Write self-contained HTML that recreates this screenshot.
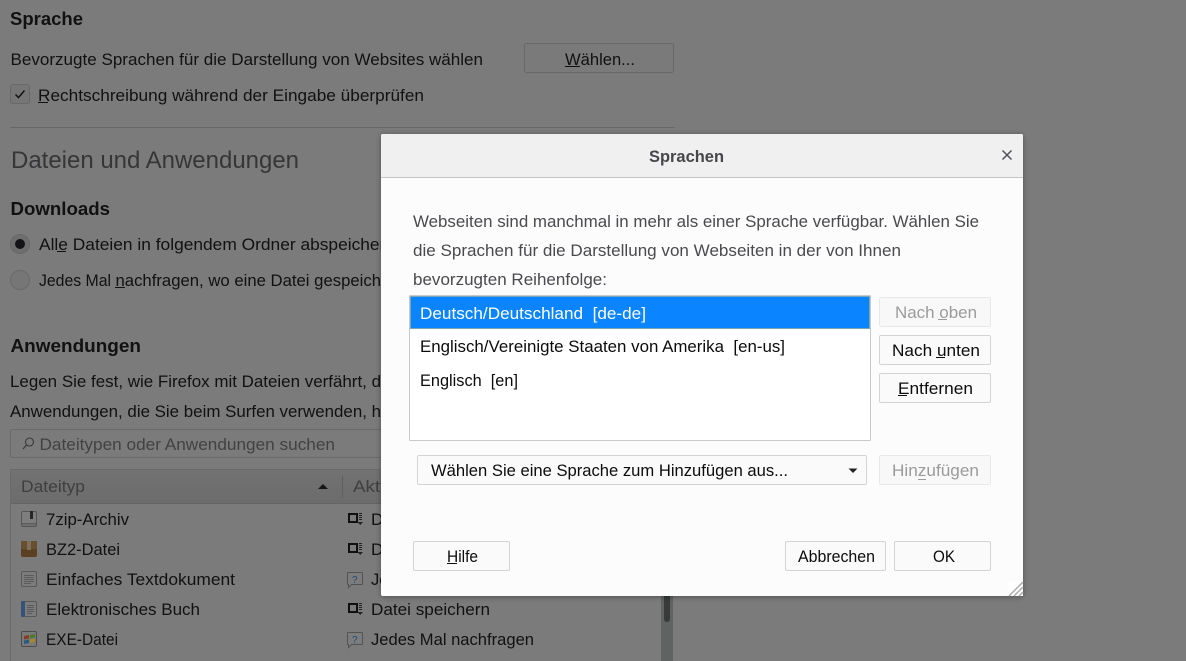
<!DOCTYPE html>
<html lang="de"><head><meta charset="utf-8"><title>Sprachen</title>
<style>
html,body{margin:0;padding:0;background:#7b7b7b;overflow:hidden}
svg{display:block}
text{font-family:"Liberation Sans",sans-serif;font-size:16.5px;fill:#0e0e10;white-space:pre}
.b{font-weight:bold}
.d{fill:#111}
.g{fill:#3d3d3f}
.m{fill:#4a4a4f}
.k{fill:#0c0c0d}
.x{fill:#9b9b9e}
</style></head><body>
<svg width="1186" height="661" viewBox="0 0 1186 661" xmlns="http://www.w3.org/2000/svg">
<defs>
<linearGradient id="hd" x1="0" y1="0" x2="0" y2="1"><stop offset="0" stop-color="#727272"/><stop offset="1" stop-color="#6c6c6c"/></linearGradient>
<filter id="sh" x="-5%" y="-5%" width="110%" height="110%"><feDropShadow dx="0" dy="1" stdDeviation="3" flood-color="#000" flood-opacity=".35"/></filter>
</defs>
<rect width="1186" height="661" fill="#7b7b7b"/>

<!-- background page -->
<text class="b d" x="10" y="25" textLength="73" lengthAdjust="spacingAndGlyphs" style="font-size:18px">Sprache</text>
<text class="d" x="10.5" y="65" textLength="472.5" lengthAdjust="spacingAndGlyphs">Bevorzugte Sprachen für die Darstellung von Websites wählen</text>
<rect x="524.5" y="43.5" width="149" height="29" rx="2" fill="#7a7a7a" stroke="#696969"/>
<text class="d" x="565" y="65" textLength="70" lengthAdjust="spacingAndGlyphs">Wählen...</text>
<rect x="565" y="66" width="15" height="1" fill="#111"/>
<rect x="10.5" y="84.5" width="19" height="19" rx="2" fill="#767676" stroke="#686868"/>
<path d="M15.5 94.5l3 3 6-7" fill="none" stroke="#141414" stroke-width="1.5"/>
<text class="d" x="38" y="101" textLength="386" lengthAdjust="spacingAndGlyphs">Rechtschreibung während der Eingabe überprüfen</text>
<rect x="38" y="102" width="10" height="1" fill="#111"/>
<rect x="10" y="127" width="665" height="1" fill="#686868"/>
<text x="11" y="168" textLength="288" lengthAdjust="spacingAndGlyphs" style="font-size:24px;fill:#363638">Dateien und Anwendungen</text>
<text class="b d" x="10.5" y="215" textLength="99.5" lengthAdjust="spacingAndGlyphs" style="font-size:18px">Downloads</text>

<circle cx="20" cy="244" r="9.5" fill="#6e6e6e" stroke="#686868"/>
<circle cx="20" cy="244" r="5" fill="#141416"/>
<text class="d" x="39" y="250" textLength="356" lengthAdjust="spacingAndGlyphs">Alle Dateien in folgendem Ordner abspeichern</text>
<rect x="57" y="251" width="9" height="1" fill="#111"/>
<circle cx="20" cy="280" r="9.5" fill="#767676" stroke="#696969"/>
<text class="d" x="39" y="286" textLength="72" lengthAdjust="spacingAndGlyphs">Jedes Mal</text>
<text class="d" x="115.500" y="286" textLength="265.500" lengthAdjust="spacingAndGlyphs">nachfragen, wo eine Datei gespeich</text>
<rect x="115" y="287" width="10" height="1" fill="#111"/>

<text class="b d" x="10.5" y="352" textLength="130.5" lengthAdjust="spacingAndGlyphs" style="font-size:18px">Anwendungen</text>
<text class="d" x="10" y="387" textLength="371" lengthAdjust="spacingAndGlyphs">Legen Sie fest, wie Firefox mit Dateien verfährt, d</text>
<text class="d" x="10" y="417" textLength="371" lengthAdjust="spacingAndGlyphs">Anwendungen, die Sie beim Surfen verwenden, h</text>

<rect x="10.5" y="429.5" width="400" height="28" rx="2" fill="#7b7b7b" stroke="#6a6a6a"/>
<circle cx="29.5" cy="442" r="4" fill="none" stroke="#383838" stroke-width="1.1"/>
<path d="M26.5 445l-3.5 4" stroke="#383838" stroke-width="1.2"/>
<text x="39.5" y="450" textLength="295.5" lengthAdjust="spacingAndGlyphs" style="fill:#424244">Dateitypen oder Anwendungen suchen</text>

<rect x="10.5" y="469.5" width="662" height="200" fill="#7b7b7b" stroke="#6a6a6a"/>
<rect x="11" y="470" width="650" height="33" fill="url(#hd)"/>
<rect x="11" y="503" width="650" height="1" fill="#646464"/>
<text x="21" y="492" textLength="64" lengthAdjust="spacingAndGlyphs" style="fill:#3f3f41">Dateityp</text>
<path d="M318 489l5-5 5 5z" fill="#161616"/>
<rect x="342" y="476" width="1" height="21" fill="#5f5f5f"/>
<text x="353" y="492" textLength="52" lengthAdjust="spacingAndGlyphs" style="fill:#3f3f41">Aktion</text>

<text class="d" x="46" y="525" textLength="83" lengthAdjust="spacingAndGlyphs">7zip-Archiv</text>
<text class="d" x="46" y="555" textLength="74" lengthAdjust="spacingAndGlyphs">BZ2-Datei</text>
<text class="d" x="46" y="585" textLength="189" lengthAdjust="spacingAndGlyphs">Einfaches Textdokument</text>
<text class="d" x="46" y="615" textLength="154" lengthAdjust="spacingAndGlyphs">Elektronisches Buch</text>
<text class="d" x="46" y="645" textLength="72" lengthAdjust="spacingAndGlyphs">EXE-Datei</text>

<!-- file icons -->
<rect x="21.5" y="511.5" width="15" height="15" rx="1.5" fill="#7e7e7e" stroke="#565656"/>
<path d="M22 523.5h14M22 525h14" stroke="#5c5c5c"/><rect x="30" y="511" width="3" height="8" fill="#262626"/>
<rect x="21" y="541" width="16" height="16" rx="2" fill="#5a4124"/>
<rect x="21" y="541" width="16" height="8" fill="#66502f"/><rect x="27" y="541" width="4" height="9" fill="#7d6f5a"/>
<rect x="21.5" y="571.5" width="15" height="15" rx="1.5" fill="#7c7c7c" stroke="#585858"/>
<path d="M24 575.5h10M24 577.5h10M24 579.5h10M24 581.5h10M24 583.5h7" stroke="#5a5a5a"/>
<rect x="21.5" y="601.5" width="15" height="15" rx="1.5" fill="#7c7c7c" stroke="#585858"/>
<rect x="21" y="601" width="4" height="16" rx="1" fill="#36527a"/>
<path d="M27 605.5h7M27 607.5h7M27 609.5h7M27 611.5h7M27 613.5h5" stroke="#5a5a5a"/>
<rect x="21.5" y="631.5" width="15" height="15" rx="1.5" fill="#7a7a7a" stroke="#4c4c4c"/>
<path d="M24 636l5-1v3.500l-5 1z" fill="#8a3a22"/><path d="M30 635l5-1v3.500l-5 1z" fill="#4d7a2a"/><path d="M24 640.500l5-1v3.500l-5 1z" fill="#2a5a8a"/><path d="M30 639.500l5-1v3.500l-5 1z" fill="#a8862a"/>

<!-- action icons -->
<g><rect x="349" y="514" width="8" height="8" fill="none" stroke="#101010" stroke-width="2"/><path d="M359 513.5h3M359 515.5h3M359 517.5h3M359 519.5h3" stroke="#222"/><path d="M357.5 522h5.5l-2.750 3z" fill="#222"/></g>
<g transform="translate(0,30)"><rect x="349" y="514" width="8" height="8" fill="none" stroke="#101010" stroke-width="2"/><path d="M359 513.5h3M359 515.5h3M359 517.5h3M359 519.5h3" stroke="#222"/><path d="M357.5 522h5.500l-2.750 3z" fill="#222"/></g>
<g transform="translate(0,90)"><rect x="349" y="514" width="8" height="8" fill="none" stroke="#101010" stroke-width="2"/><path d="M359 513.5h3M359 515.5h3M359 517.5h3M359 519.5h3" stroke="#222"/><path d="M357.5 522h5.500l-2.750 3z" fill="#222"/></g>
<path d="M348.500 572.500h13a1 1 0 0 1 1 1v10a1 1 0 0 1-1 1h-10l-3 3v-3a1 1 0 0 1-1-1v-10a1 1 0 0 1 1-1z" fill="#7c7c7c" stroke="#525252"/>
<text x="352" y="583" style="font-size:10px;fill:#234a78">?</text>
<path d="M348.500 632.500h13a1 1 0 0 1 1 1v10a1 1 0 0 1-1 1h-10l-3 3v-3a1 1 0 0 1-1-1v-10a1 1 0 0 1 1-1z" fill="#7c7c7c" stroke="#525252"/>
<text x="352" y="643" style="font-size:10px;fill:#234a78">?</text>

<text class="d" x="371" y="525" textLength="119" lengthAdjust="spacingAndGlyphs">Datei speichern</text>
<text class="d" x="371" y="555" textLength="119" lengthAdjust="spacingAndGlyphs">Datei speichern</text>
<text class="d" x="371" y="585" textLength="163" lengthAdjust="spacingAndGlyphs">Jedes Mal nachfragen</text>
<text class="d" x="371" y="615" textLength="119" lengthAdjust="spacingAndGlyphs">Datei speichern</text>
<text class="d" x="371" y="645" textLength="163" lengthAdjust="spacingAndGlyphs">Jedes Mal nachfragen</text>

<rect x="661" y="504" width="12" height="157" fill="#5f6361"/>
<rect x="664" y="504" width="6" height="118" rx="3" fill="#383b3a"/>

<!-- dialog -->
<rect x="381" y="134" width="642" height="462" rx="2" fill="#fcfcfc" filter="url(#sh)"/>
<path d="M381 177v-41a2 2 0 0 1 2-2h638a2 2 0 0 1 2 2v41z" fill="#f0f0f0"/>
<rect x="381" y="177" width="642" height="1" fill="#c4c4c4"/>
<text class="b" x="649" y="162" textLength="75" lengthAdjust="spacingAndGlyphs" style="fill:#46464b;font-size:16.500px">Sprachen</text>
<path d="M1002.500 150.500l9 9M1011.500 150.500l-9 9" stroke="#50505a" stroke-width="1.500" fill="none"/>

<text class="m" x="413" y="227" textLength="566" lengthAdjust="spacingAndGlyphs">Webseiten sind manchmal in mehr als einer Sprache verfügbar. Wählen Sie</text>
<text class="m" x="413" y="256" textLength="488" lengthAdjust="spacingAndGlyphs">die Sprachen für die Darstellung von Webseiten in der von Ihnen</text>
<text class="m" x="413" y="285" textLength="194" lengthAdjust="spacingAndGlyphs">bevorzugten Reihenfolge:</text>

<rect x="409.500" y="295.500" width="461" height="145" rx="1" fill="#fff" stroke="#c8c8c8"/>
<rect x="410" y="296" width="460" height="33" fill="#0a84ff"/>
<rect x="410.500" y="296.500" width="459" height="32" fill="none" stroke="#e8c877" stroke-dasharray="1 1"/>
<text x="420" y="319" textLength="226" lengthAdjust="spacingAndGlyphs" style="fill:#fff">Deutsch/Deutschland  [de-de]</text>
<text class="k" x="420" y="352" textLength="365" lengthAdjust="spacingAndGlyphs">Englisch/Vereinigte Staaten von Amerika  [en-us]</text>
<text class="k" x="420" y="386" textLength="98" lengthAdjust="spacingAndGlyphs">Englisch  [en]</text>

<rect x="879.500" y="297.500" width="111" height="29" rx="1.500" fill="#f8f8f8" stroke="#e8e8e8"/>
<text class="x" x="895" y="318" textLength="82" lengthAdjust="spacingAndGlyphs">Nach oben</text>
<rect x="938" y="319" width="9" height="1" fill="#9b9b9e"/>
<rect x="879.500" y="335.500" width="111" height="29" rx="1.500" fill="#fafafa" stroke="#d4d4d4"/>
<text class="k" x="892" y="356" textLength="88" lengthAdjust="spacingAndGlyphs">Nach unten</text>
<rect x="936" y="357" width="9" height="1" fill="#0c0c0d"/>
<rect x="879.500" y="373.500" width="111" height="29" rx="1.500" fill="#fafafa" stroke="#d4d4d4"/>
<text class="k" x="898" y="394" textLength="75" lengthAdjust="spacingAndGlyphs">Entfernen</text>
<rect x="898" y="395" width="9" height="1" fill="#0c0c0d"/>

<rect x="417.500" y="455.500" width="449" height="29" rx="1.500" fill="#fafafa" stroke="#d4d4d4"/>
<text class="k" x="431" y="476" textLength="357" lengthAdjust="spacingAndGlyphs">Wählen Sie eine Sprache zum Hinzufügen aus...</text>
<path d="M848.500 468.500h9l-4.500 4.500z" fill="#222"/>
<rect x="879.500" y="455.500" width="111" height="29" rx="1.500" fill="#f8f8f8" stroke="#e8e8e8"/>
<text class="x" x="892" y="476" textLength="87" lengthAdjust="spacingAndGlyphs">Hinzufügen</text>
<rect x="918" y="479" width="8" height="1" fill="#9b9b9e"/>

<rect x="413.500" y="541.500" width="96" height="29" rx="1.500" fill="#fafafa" stroke="#d4d4d4"/>
<text class="k" x="447" y="562" textLength="31" lengthAdjust="spacingAndGlyphs">Hilfe</text>
<rect x="447" y="563" width="10" height="1" fill="#0c0c0d"/>
<rect x="785.500" y="541.500" width="100" height="29" rx="1.500" fill="#fafafa" stroke="#d4d4d4"/>
<text class="k" x="798" y="562" textLength="77" lengthAdjust="spacingAndGlyphs">Abbrechen</text>
<rect x="894.500" y="541.500" width="96" height="29" rx="1.500" fill="#fafafa" stroke="#d4d4d4"/>
<text class="k" x="933" y="562" textLength="22" lengthAdjust="spacingAndGlyphs">OK</text>

<rect x="1008" y="582" width="15" height="14" fill="#fff"/>
<path d="M1009 596l14-14M1014 596l9-9M1019 596l4-4" stroke="#a9a9a9" stroke-width="1.500" fill="none"/>
</svg>
</body></html>
